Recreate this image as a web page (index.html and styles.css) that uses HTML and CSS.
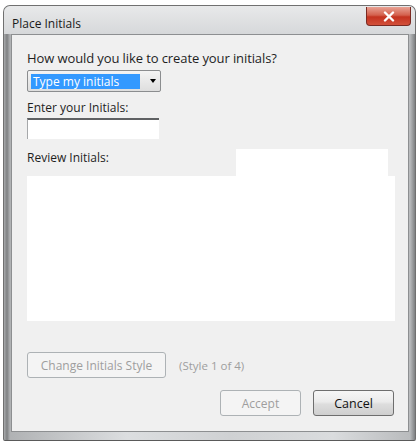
FILE: index.html
```html
<!DOCTYPE html>
<html>
<head>
<meta charset="utf-8">
<link rel="stylesheet" href="styles.css">
</head>
<body>
<div class="window">
  <div class="titlebar">
    <span class="title">Place Initials</span>
    <button class="close" aria-label="Close">
      <svg width="12" height="11" viewBox="0 0 12 11"><path d="M2 1.5 L10 9.5 M10 1.5 L2 9.5" stroke="#fff" stroke-width="2.4" stroke-linecap="round"/></svg>
    </button>
  </div>
  <div class="content">
    <div class="label first">How would you like to create your initials?</div>
    <div class="select">
      <span class="selected">Type my initials</span>
      <span class="arrow"></span>
    </div>
    <div class="label">Enter your Initials:</div>
    <div class="textbox"></div>
    <div class="review-head">
      <span class="label">Review Initials:</span>
      <span class="preview-tab"></span>
    </div>
    <div class="preview"></div>
    <div class="style-row">
      <button class="btn disabled wide">Change Initials Style</button>
      <span class="style-note">(Style 1 of 4)</span>
    </div>
    <div class="actions">
      <button class="btn disabled">Accept</button>
      <button class="btn primary">Cancel</button>
    </div>
  </div>
</div>
</body>
</html>
```

FILE: styles.css
```css
html, body {
  margin: 0;
  padding: 0;
  background: #ffffff;
}

body {
  font-family: "Open Sans", "Noto Sans", sans-serif;
  font-size: 12px;
  color: #1e1e1e;
}

.window {
  box-sizing: border-box;
  width: 413px;
  height: 436px;
  margin: 5px 0 0 3px;
  border: 1px solid #707070;
  border-bottom-color: #5a5a5a;
  border-radius: 7px 7px 2px 2px;
  background: linear-gradient(90deg, #a9abad 0px, #7f8183 3px, #b0b2b4 6px, #dcdee0 30%, #cfd1d3 55%, #dadcde 80%, #b9bbbd calc(100% - 5px), #7e8082 100%);
  padding: 0 6px 8px 7px;
  display: flex;
  flex-direction: column;
}

.titlebar {
  height: 28px;
  display: flex;
  align-items: flex-start;
  justify-content: space-between;
  background: linear-gradient(180deg, #e8e9ea 0%, #d6d8da 100%);
  margin: 0 -6px 0 -7px;
  padding: 0 4px 0 8px;
  border-radius: 6px 6px 0 0;
}

.title {
  margin-top: 9px;
  font-size: 12px;
  color: #1a1a1a;
}

.close {
  width: 45px;
  height: 19px;
  margin-top: 1px;
  border: 1px solid #7a2a22;
  border-top: none;
  border-radius: 0 0 4px 4px;
  background: linear-gradient(180deg, #e8a294 0%, #d4614d 45%, #c4331f 55%, #d2503a 100%);
  display: flex;
  align-items: center;
  justify-content: center;
  padding: 0;
}

.content {
  flex: 1;
  background: #f0f0f0;
  border: 1px solid #8d8f91;
  padding: 15px 12px 0 15px;
  display: flex;
  flex-direction: column;
  align-items: flex-start;
}

.label {
  line-height: 16px;
}

.first {
  font-size: 13px;
  letter-spacing: -0.1px;
}

.select {
  box-sizing: border-box;
  width: 134px;
  height: 22px;
  margin-top: 4px;
  border: 1px solid #8b8d8f;
  border-radius: 2px;
  background: linear-gradient(180deg, #f4f4f4, #dedede);
  display: flex;
  align-items: center;
  padding: 0 3px;
}

.selected {
  flex: 0 0 109px;
  height: 15px;
  line-height: 15px;
  background: #3399ff;
  color: #fff;
  padding-left: 2px;
  box-sizing: border-box;
}

.arrow {
  margin-left: 10px;
  width: 0;
  height: 0;
  border-left: 3.5px solid transparent;
  border-right: 3.5px solid transparent;
  border-top: 4px solid #000;
}

.select + .label {
  margin-top: 8px;
}

.textbox {
  box-sizing: border-box;
  width: 132px;
  height: 21px;
  margin-top: 2px;
  background: #fff;
  border-top: 2px solid #5f6163;
  border-left: 1px solid #a6a8aa;
}

.review-head {
  display: flex;
  align-items: flex-end;
  width: 100%;
  margin-top: 10px;
}

.review-head .label {
  padding-bottom: 10px;
}

.preview-tab {
  width: 152px;
  height: 27px;
  margin-left: auto;
  margin-right: 8px;
  background: #fff;
}

.preview {
  width: 368px;
  height: 145px;
  background: #fff;
}

.style-row {
  display: flex;
  align-items: center;
  gap: 13px;
  margin-top: 31px;
}

.btn {
  box-sizing: border-box;
  height: 26px;
  font-family: inherit;
  font-size: 12px;
  border-radius: 3px;
  padding: 0;
}

.btn.disabled {
  background: #f4f4f4;
  border: 1px solid #adb2b5;
  color: #9e9e9e;
}

.btn.wide {
  width: 139px;
}

.style-note {
  color: #9e9e9e;
  font-size: 11.5px;
}

.actions {
  display: flex;
  gap: 12px;
  align-self: flex-end;
  margin-top: 12px;
  margin-right: 2px;
}

.actions .btn {
  width: 81px;
}

.btn.primary {
  border: 1px solid #6e6e6e;
  background: linear-gradient(180deg, #f6f6f6 0%, #ebebeb 45%, #dddddd 55%, #cfcfcf 100%);
  color: #111;
  font-size: 12.5px;
}
```
